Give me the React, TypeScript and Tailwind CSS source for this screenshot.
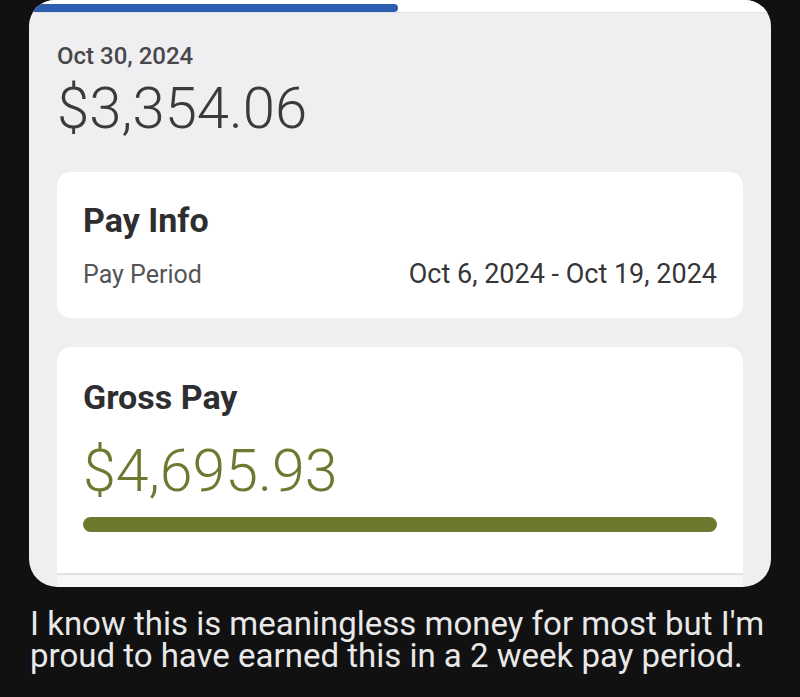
// App.tsx - pay stub screenshot with caption

export default function App() {
  return (
    <div className="h-[697px] w-[800px] overflow-hidden bg-[#111111] font-['Roboto','Liberation_Sans',sans-serif]">
      <div className="mx-[29px] flex h-[587px] flex-col overflow-hidden rounded-t-[26px] rounded-b-[28px] bg-[#efeff2]">
        {/* top strip with progress bar */}
        <div className="h-[13px] border-b border-[#e2e2e6] bg-white pt-[4px]">
          <div className="h-[8px] w-[369px] rounded-r-full bg-[#2c5eb0]" />
        </div>

        <div className="flex flex-1 flex-col px-[28px] pt-[28px]">
          <div className="text-[24px] font-medium leading-[30px] text-[#48484a]">Oct 30, 2024</div>
          <div className="mt-[6px] text-[58px] font-light leading-[62px] text-[#3b3b3d]">$3,354.06</div>

          {/* pay info */}
          <div className="mt-[33px] h-[146px] rounded-[14px] bg-white px-[26px] pt-[28px]">
            <div className="text-[34px] font-bold leading-[40px] text-[#2e2e30]">Pay Info</div>
            <div className="mt-[18px] flex items-baseline justify-between">
              <span className="text-[25px] leading-[32px] text-[#555557]">Pay Period</span>
              <span className="text-[27px] leading-[32px] text-[#363638]">Oct 6, 2024 - Oct 19, 2024</span>
            </div>
          </div>

          {/* gross pay */}
          <div className="mt-[29px] flex flex-1 flex-col rounded-t-[14px] border-b-2 border-[#e2e2e5] bg-white px-[26px] pt-[30px]">
            <div className="text-[34px] font-bold leading-[40px] text-[#2e2e30]">Gross Pay</div>
            <div className="mt-[22px] text-[59px] font-light leading-[64px] text-[#6b7a30]">$4,695.93</div>
            <div className="mt-[14px] h-[15px] w-full rounded-full bg-[#6c7a2e]" />
          </div>
          <div className="h-[12px] bg-[#f7f7f9]" />
        </div>
      </div>

      <p className="px-[30px] pt-[21px] text-[33px] leading-[32px] text-[#e8e8e8]">
        I know this is meaningless money for most but I'm proud to have earned this in a 2 week pay period.
      </p>
    </div>
  );
}
